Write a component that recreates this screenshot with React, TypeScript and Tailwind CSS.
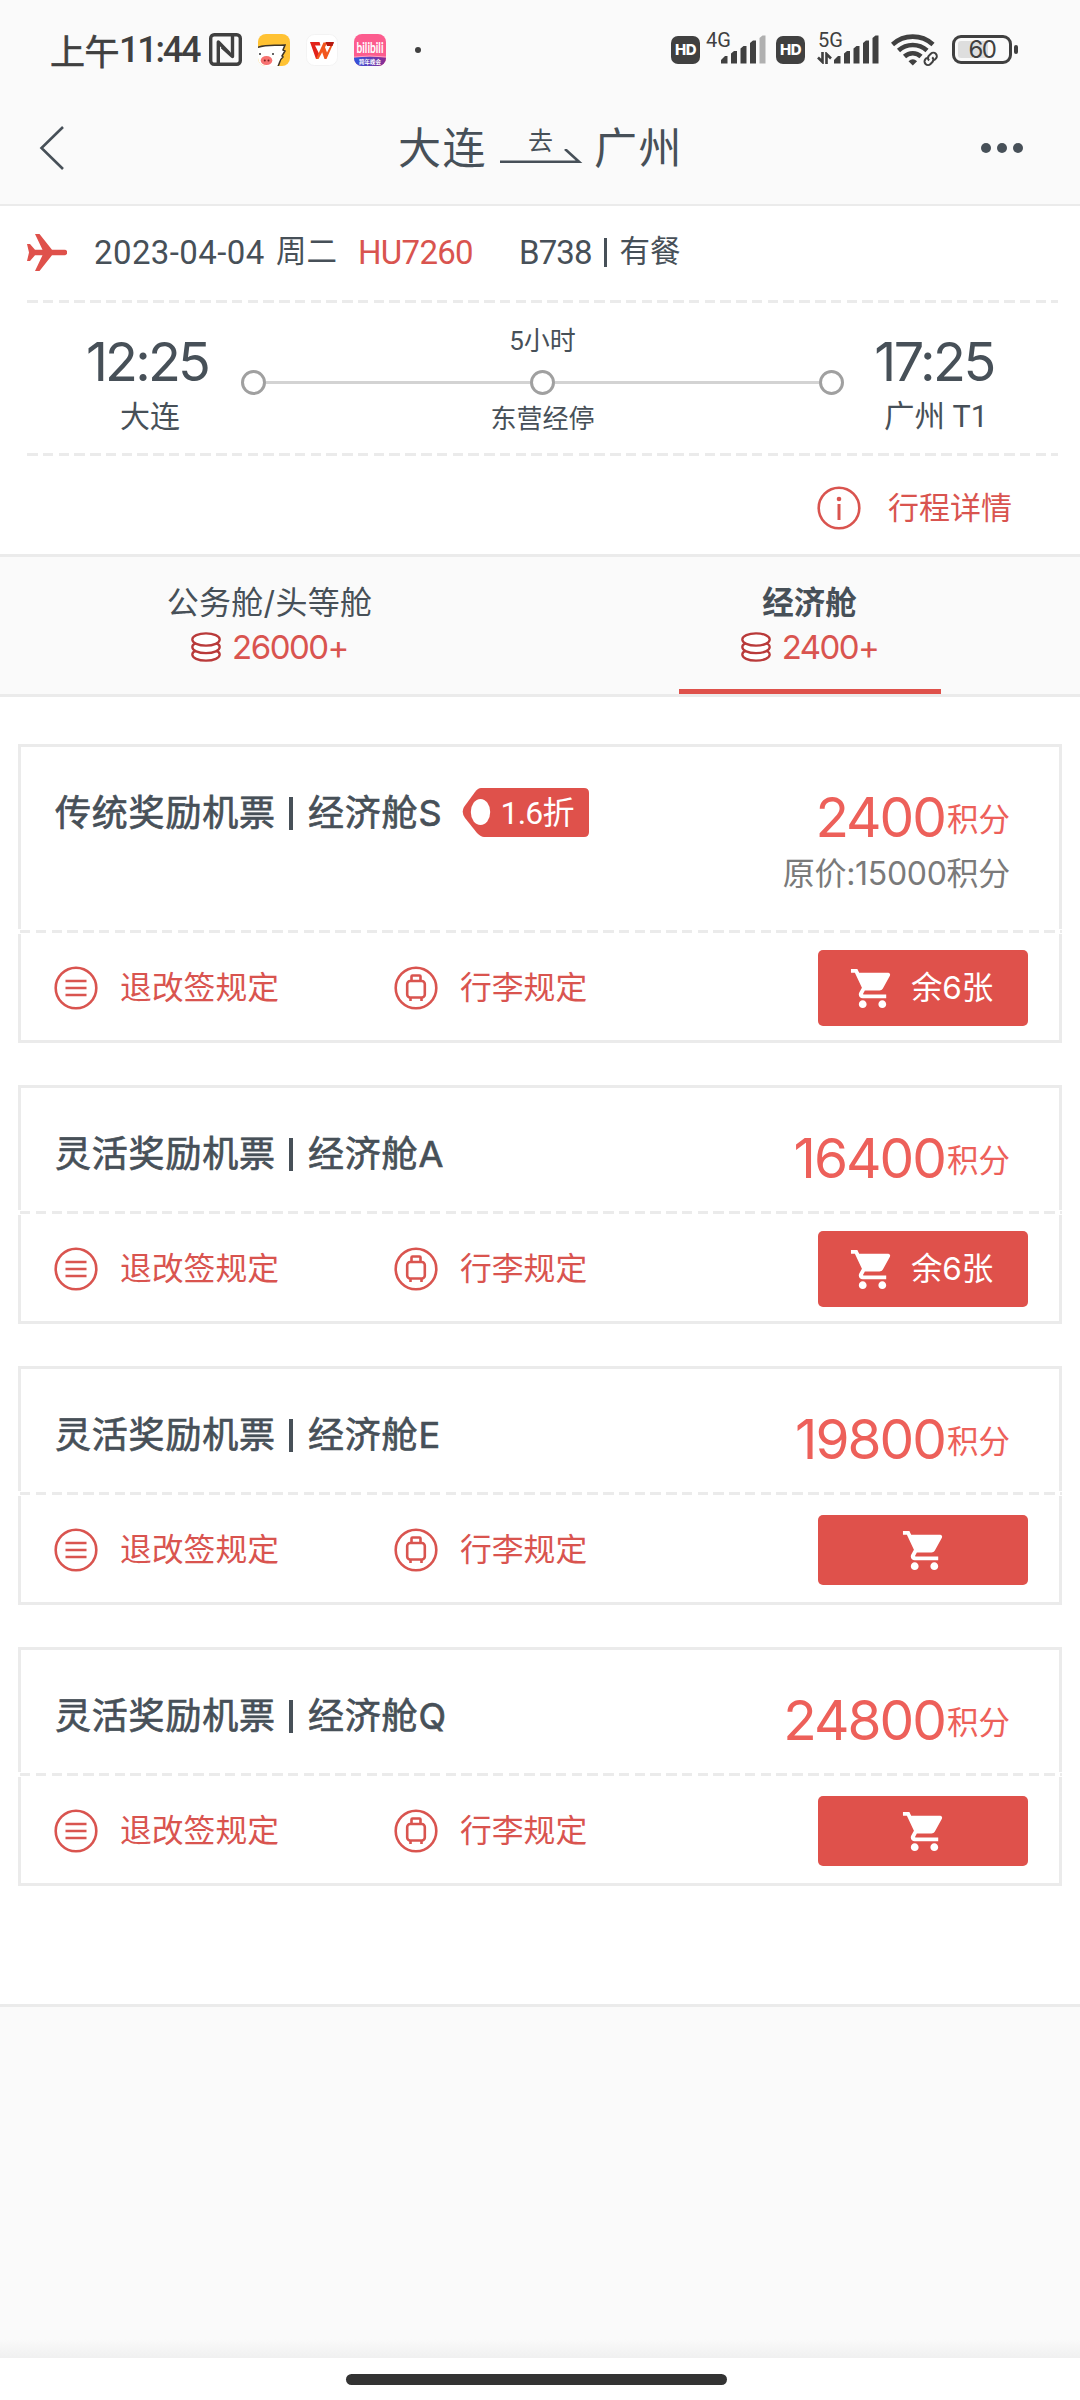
import React from "react";

type Fare = { name: string; discount?: string; price: string; original?: string; left?: string };

const fares: Fare[] = [
  { name: "传统奖励机票丨经济舱S", discount: "1.6折", price: "2400", original: "原价:15000积分", left: "余6张" },
  { name: "灵活奖励机票丨经济舱A", price: "16400", left: "余6张" },
  { name: "灵活奖励机票丨经济舱E", price: "19800" },
  { name: "灵活奖励机票丨经济舱Q", price: "24800" },
];

function HdBadge() {
  return (
    <div className="flex h-[28px] w-[29px] items-center justify-center rounded-[7px] bg-[#404040] font-['Inter',sans-serif] text-[15px] leading-none font-extrabold tracking-[-0.5px] text-white">
      HD
    </div>
  );
}

function Signal({ faded = false }: { faded?: boolean }) {
  return (
    <svg width="45" height="29" viewBox="0 0 45 29" fill="#404040" className="block">
      <path d="M0 28.500V25l4-4h2.500v7.500z" />
      <path d="M10 28.500V18.500l3-2.500h3v12.500z" />
      <path d="M19.500 28.500V13.500l3-2.500h3v17.500z" />
      <path d="M29 28.500V8l3-2.500h3v23z" />
      <path d="M38.500 28.500V3l3-2.500h3v28z" fill={faded ? "#b0b0b0" : "#404040"} />
    </svg>
  );
}

function StatusBar() {
  return (
    <div className="flex h-[99px] w-full items-center text-[#404040]">
      <div className="ml-[50px] flex w-[159px] items-center leading-none whitespace-nowrap">
        <span className="w-[69px] font-['Noto_Sans_CJK_SC',sans-serif] text-[35px] tracking-[-0.5px] [-webkit-text-stroke:0.6px_#404040]">上午</span>
        <span className="font-['Roboto',sans-serif] text-[36px] font-medium tracking-[-2.2px]">11:44</span>
      </div>
      <svg width="33" height="33" viewBox="0 0 33 33" fill="none" stroke="#404040" className="block">
        <rect x="1.700" y="1.700" width="29.600" height="29.600" rx="3.500" strokeWidth="3.400" />
        <path d="M9.300 30V9L20 20M23.500 3V23.500L13 14" strokeWidth="3.400" strokeLinejoin="round" />
      </svg>
      <svg width="32" height="32" viewBox="0 0 32 32" className="ml-[16px] block">
        <defs>
          <clipPath id="pig"><rect width="32" height="32" rx="8" /></clipPath>
        </defs>
        <g clipPath="url(#pig)">
          <rect width="32" height="32" fill="#ffc233" />
          <path d="M-2 14C8 10 16 12 27 11L25 16L27 17L24 22L25 23C21 26 22 30 19 34H-2Z" fill="#fff" stroke="#3d3428" strokeWidth="1.500" />
          <ellipse cx="8.500" cy="26.500" rx="5.800" ry="4.600" fill="#f7716f" />
          <circle cx="6.800" cy="26.500" r="1" fill="#7a2020" />
          <circle cx="10.500" cy="26.500" r="1" fill="#7a2020" />
          <circle cx="2" cy="20" r="1" fill="#333" />
          <circle cx="15" cy="20" r="1" fill="#333" />
        </g>
      </svg>
      <svg width="32" height="32" viewBox="0 0 32 32" className="ml-[16px] block">
        <rect x=".5" y=".5" width="31" height="31" rx="8" fill="#fff" stroke="#f3f3f3" />
        <path d="M4 8H13.500L14.500 11.500H9L13 19.500L11.500 25H10Z" fill="#e2231a" />
        <path d="M10 25L17.500 8.500H21.500L12.500 25Z" fill="#f2571d" />
        <path d="M15 15L18 10.500L21 18.500L24.500 11.500L28 8L20.500 25H18.500Z" fill="#f2571d" />
        <path d="M19.500 8H28L26.500 12H21Z" fill="#b5180f" />
      </svg>
      <svg width="32" height="32" viewBox="0 0 32 32" className="ml-[16px] block">
        <defs>
          <clipPath id="bili"><rect width="32" height="32" rx="8" /></clipPath>
          <linearGradient id="biliFoot" x1="0" x2="1" y1="0" y2="0">
            <stop offset="0" stopColor="#2b55e0" />
            <stop offset="1" stopColor="#8d2b90" />
          </linearGradient>
        </defs>
        <g clipPath="url(#bili)">
          <rect width="32" height="32" fill="#fc5c8e" />
          <path d="M0 23.500Q16 21.500 32 23.500V32H0Z" fill="url(#biliFoot)" />
          <path d="M0 23Q16 21 32 23" fill="none" stroke="#ff9fc0" strokeWidth="1" />
          <text x="16" y="19" textAnchor="middle" fill="#fff" fontFamily="Lato, sans-serif" fontWeight="700" fontSize="15" textLength="27" lengthAdjust="spacingAndGlyphs">bilibili</text>
          <text x="16" y="30" textAnchor="middle" fill="#fff" fontFamily="Noto Sans CJK SC, sans-serif" fontWeight="700" fontSize="5.500">跨年晚会</text>
        </g>
      </svg>
      <div className="ml-[29px] size-[6px] rounded-full bg-[#404040]" />
      <div className="ml-auto flex items-center pr-[62px]">
        <HdBadge />
        <div className="relative ml-[21px]">
          <Signal faded />
          <span className="absolute -top-[5px] -left-[15px] font-['Roboto',sans-serif] text-[20px] leading-none">4G</span>
        </div>
        <div className="ml-[10px]"><HdBadge /></div>
        <div className="relative ml-[29px]">
          <Signal />
          <span className="absolute -top-[5px] -left-[16px] font-['Roboto',sans-serif] text-[20px] leading-none">5G</span>
          <svg width="15" height="12" viewBox="0 0 15 12" fill="none" stroke="#404040" strokeWidth="2.600" className="absolute top-[17px] -left-[17px] block">
            <path d="M5.500 0V10L1 5.500M9.500 12V2L14 6.500" />
          </svg>
        </div>
        <svg width="48" height="33" viewBox="0 0 48 33" fill="none" stroke="#404040" className="ml-[12px] block">
          <g strokeWidth="4.600">
            <path d="M1.500 11.500A30 30 0 0 1 42 11.500" />
            <path d="M7.500 17.500A21 21 0 0 1 36 17.500" />
            <path d="M13.500 23.500A12 12 0 0 1 30 23.500" />
          </g>
          <path d="M17.500 28.200Q21.800 24.500 26.100 28.200L21.800 32.500Z" fill="#404040" stroke="none" />
          <g strokeWidth="2" transform="rotate(-45 39.500 26)">
            <path d="M38 22.500H36A3.500 3.500 0 0 0 36 29.500H39A3.500 3.500 0 0 0 42 26" />
            <path d="M41 29.500H43.500A3.500 3.500 0 0 0 43.500 22.500H40.500A3.500 3.500 0 0 0 37.500 26" />
          </g>
        </svg>
        <div className="relative ml-[13px] flex h-[29px] w-[60px] items-center justify-center rounded-[9px] border-[3px] border-[#404040]">
          <div className="absolute top-[3px] left-[3px] h-[17px] w-[30px] rounded-[3px] bg-[#dedede]" />
          <span className="relative font-['Inter',sans-serif] text-[24px] leading-none tracking-[-1.5px]">60</span>
        </div>
        <div className="ml-[2px] h-[9px] w-[4px] rounded-[2px] bg-[#404040]" />
      </div>
    </div>
  );
}

function NavBar() {
  return (
    <div className="flex h-[105px] items-start text-[#475058]">
      <svg width="26" height="44" viewBox="0 0 26 44" fill="none" stroke="#475058" strokeWidth="2.600" className="mt-[27px] ml-[39px] block">
        <path d="M24 1L2.500 22L24 43" />
      </svg>
      <div className="mt-[22px] ml-[333px] flex h-[48px] items-center font-['Noto_Sans_CJK_SC',sans-serif]">
        <span className="w-[90px] text-[43px] leading-none tracking-[1.5px] whitespace-nowrap">大连</span>
        <div className="ml-[12px] flex w-[83px] flex-col items-center">
          <span className="mr-[2px] h-[24px] text-[25px] leading-none">去</span>
          <svg width="83" height="15" viewBox="0 0 83 15" fill="none" stroke="#475058" strokeWidth="2.600" className="-mt-[2px] block">
            <path d="M0 12.700H79L65 0" />
          </svg>
        </div>
        <span className="ml-[11px] text-[43px] leading-none tracking-[1.5px] whitespace-nowrap">广州</span>
      </div>
      <div className="mt-[44px] ml-auto flex gap-[6px] pr-[57px]">
        <i className="size-[10px] rounded-full bg-[#475058]" />
        <i className="size-[10px] rounded-full bg-[#475058]" />
        <i className="size-[10px] rounded-full bg-[#475058]" />
      </div>
    </div>
  );
}

function Dashes({ className = "" }: { className?: string }) {
  return (
    <div
      className={
        "h-[3px] bg-[repeating-linear-gradient(90deg,#ebebeb_0,#ebebeb_10.5px,#ffffff_10.5px,#ffffff_15.76px)] " + className
      }
    />
  );
}

function Dot() {
  return <i className="block size-[25px] shrink-0 rounded-full border-[3px] border-[#a0a0a0] bg-white" />;
}

function Flight() {
  return (
    <section className="h-[348px] font-['Roboto','Noto_Sans_CJK_SC',sans-serif] text-[#475058]">
      <div className="flex h-[94px] items-center pb-[1px] pl-[27px] text-[33px] leading-none whitespace-nowrap">
        <svg width="40" height="37" viewBox="0 0 40 37" fill="#df514b" className="block">
          <path d="M0 10H3L8 15.800H15.500L8 0H12.500L25 15.800H37.500a2.700 2.700 0 0 1 0 5.400H25L12.500 37H8L15.500 21.200H8L3 27H0L2 18.500Z" />
        </svg>
        <span className="ml-[27px] w-[182px] tracking-[0.4px]">2023-04-04</span>
        <span className="w-[82px] text-[30.500px]">周二</span>
        <span className="w-[161px] tracking-[-0.7px] text-[#d9544f]">HU7260</span>
        <span className="w-[85px] tracking-[-0.9px]">B738</span>
        <i className="h-[29px] w-[2.500px] bg-[#475058]" />
        <span className="ml-[13px] text-[30.500px]">有餐</span>
      </div>
      <Dashes className="ml-[27px] w-[1031px]" />
      <div className="flex h-[150px]">
        <div className="ml-[70px] flex w-[160px] flex-col items-center">
          <span className="mt-[31px] mr-[6px] h-[56px] font-['Inter',sans-serif] text-[54px] leading-[56px] tracking-[-2.800px]">12:25</span>
          <span className="mt-[11px] text-[30px] leading-[32px]">大连</span>
        </div>
        <div className="ml-[11px] flex w-[603px] flex-col items-center">
          <span className="mt-[25px] text-[26px] leading-[26px]">5小时</span>
          <div className="mt-[16px] flex w-full items-center">
            <Dot />
            <div className="h-[3px] flex-1 bg-[#d3d3d3]" />
            <Dot />
            <div className="h-[3px] flex-1 bg-[#d3d3d3]" />
            <Dot />
          </div>
          <span className="mt-[11px] text-[26px] leading-[26px]">东营经停</span>
        </div>
        <div className="ml-[12px] flex w-[160px] flex-col items-center">
          <span className="mt-[31px] mr-[4px] h-[56px] font-['Inter',sans-serif] text-[54px] leading-[56px] tracking-[-2.500px]">17:25</span>
          <span className="mt-[11px] text-[30.500px] leading-[32px] whitespace-nowrap">广州 T1</span>
        </div>
      </div>
      <Dashes className="ml-[27px] w-[1031px]" />
      <div className="flex h-[98px] items-center justify-end pt-[6px] pr-[68px] text-[#d9544f]">
        <svg width="44" height="44" viewBox="0 0 44 44" fill="none" stroke="#d9544f" strokeWidth="2.600" className="block">
          <circle cx="22" cy="22" r="20.300" />
          <path d="M22 18V34" strokeWidth="3" />
          <circle cx="22" cy="13" r="2.300" fill="#d9544f" stroke="none" />
        </svg>
        <span className="ml-[27px] text-[31px] leading-none">行程详情</span>
      </div>
    </section>
  );
}

function Coins() {
  return (
    <svg width="30" height="30" viewBox="0 0 30 30" fill="#fff" stroke="#b93a3a" strokeWidth="2.300" className="block">
      <path d="M1.300 22.500C1.300 20 4 17.500 15 17.500S28.700 20 28.700 22.500C28.700 26 23 28.700 15 28.700S1.300 26 1.300 22.500Z" />
      <path d="M1.300 15C1.300 12 4 10 15 10S28.700 12 28.700 15C28.700 18.500 23 21.200 15 21.200S1.300 18.500 1.300 15Z" />
      <ellipse cx="15" cy="7.500" rx="13.700" ry="6.200" />
    </svg>
  );
}

function Tabs() {
  return (
    <div className="flex h-[143px] border-y-[3px] border-[#ebebeb] bg-[#fafafa] font-['Inter','Noto_Sans_CJK_SC',sans-serif]">
      <div className="flex w-[539px] flex-col items-center">
        <span className="mt-[28px] text-[32px] leading-[36px] tracking-[0.3px] text-[#475058]">公务舱/头等舱</span>
        <div className="mt-[8px] flex items-center">
          <Coins />
          <span className="ml-[11px] text-[33px] leading-[36px] tracking-[-1.5px] text-[#d9544f]">26000+</span>
        </div>
      </div>
      <div className="flex w-[541px] flex-col items-center">
        <span className="mt-[28px] text-[31.500px] leading-[36px] font-bold text-[#475058]">经济舱</span>
        <div className="mt-[8px] flex items-center">
          <Coins />
          <span className="ml-[11px] text-[33px] leading-[36px] tracking-[-1.600px] text-[#d9544f]">2400+</span>
        </div>
        <div className="mt-auto h-[5px] w-[262px] bg-[#df514b]" />
      </div>
    </div>
  );
}

function Cart() {
  return (
    <svg width="47" height="47" viewBox="0 0 24 24" fill="#fff" className="block shrink-0">
      <path d="M7 18c-1.100 0-1.990.9-1.990 2S5.900 22 7 22s2-.9 2-2-.9-2-2-2zM1 2v2h2l3.600 7.590-1.350 2.450c-.16.28-.25.61-.25.96 0 1.100.9 2 2 2h12v-2H7.420c-.14 0-.25-.11-.25-.25l.03-.12.9-1.630h7.450c.75 0 1.410-.41 1.750-1.030l3.580-6.490A1.003 1.003 0 0 0 20 4H5.210l-.94-2H1zm16 16c-1.100 0-1.990.9-1.990 2s.89 2 1.990 2 2-.9 2-2-.9-2-2-2z" />
    </svg>
  );
}

function RulesIcon() {
  return (
    <svg width="44" height="44" viewBox="0 0 44 44" fill="none" stroke="#d9544f" strokeWidth="2.600" className="block">
      <circle cx="22" cy="22" r="20.300" />
      <path d="M11.500 15H32.500M11.500 22H32.500M11.500 29H32.500" />
    </svg>
  );
}

function LuggageIcon() {
  return (
    <svg width="44" height="44" viewBox="0 0 44 44" fill="none" stroke="#d9544f" strokeWidth="2.600" className="block">
      <circle cx="22" cy="22" r="20.300" />
      <rect x="13.200" y="15" width="17.600" height="16.500" rx="3" />
      <path d="M17.500 15V10.500Q17.500 9.500 18.500 9.500H25.500Q26.500 9.500 26.500 10.500V15M16.500 31.500V35M27.500 31.500V35" />
    </svg>
  );
}

function FareCard({ fare }: { fare: Fare }) {
  const [product, cabin] = fare.name.split("丨");
  return (
    <article className="w-[1044px] font-['Inter','Noto_Sans_CJK_SC',sans-serif]">
      <div
        className={
          "flex border-x-[3px] border-t-[3px] border-[#ebebeb] pl-[34px] " + (fare.original ? "h-[185px]" : "h-[125px]")
        }
      >
        <div className="mt-[44px] flex h-[44px] items-center text-[36px] leading-none whitespace-nowrap text-[#475058] [-webkit-text-stroke:0.7px_#475058]">
          <span className="w-[234px] tracking-[0.8px]">{product}</span>
          <i className="h-[33px] w-[4px] bg-[#475058]" />
          <span className="ml-[15px] tracking-[0.8px]">
            {cabin.slice(0, 3)}
            <span className="tracking-normal">{cabin.slice(3)}</span>
          </span>
        </div>
        {fare.discount && (
          <div className="relative mt-[41px] ml-[20px] h-[49px] w-[127px]">
            <svg width="127" height="49" viewBox="0 0 127 49" className="block">
              <path d="M19 0H122Q127 0 127 5V44Q127 49 122 49H22Q19 49 15 45L3 30Q-1 24.500 2 19L13 4Q16 0 19 0Z" fill="#df514b" />
              <ellipse cx="18.500" cy="24" rx="9.700" ry="13" fill="#fff" />
            </svg>
            <span className="absolute top-[8px] left-[39px] font-['Roboto','Noto_Sans_CJK_SC',sans-serif] text-[32px] leading-[34px] tracking-[-0.8px] whitespace-nowrap text-white">
              {fare.discount}
            </span>
          </div>
        )}
        <div className="mt-[43px] ml-auto flex flex-col items-end pr-[49px] whitespace-nowrap">
          <div className="flex h-[56px] items-start text-[#ed605a]">
            <span className="-mt-[1px] text-[55px] leading-[56px] tracking-[-2px]">{fare.price}</span>
            <span className="mt-[14px] ml-[2px] text-[31.500px] leading-[32px]">积分</span>
          </div>
          {fare.original && (
            <span className="mt-[10px] text-[32px] leading-[36px] tracking-[-0.300px] text-[#7a7a7a]">{fare.original}</span>
          )}
        </div>
      </div>
      <Dashes className="my-px ml-[2px] w-[1042px]" />
      <div className="flex h-[109px] items-center border-x-[3px] border-b-[3px] border-[#ebebeb] pt-[2px] pr-[31px] pl-[33px] text-[31.800px] leading-none whitespace-nowrap text-[#d9544f]">
        <div className="flex w-[340px] items-center gap-[22px]">
          <RulesIcon />
          <span>退改签规定</span>
        </div>
        <div className="flex items-center gap-[22px]">
          <LuggageIcon />
          <span>行李规定</span>
        </div>
        <div
          className={
            "ml-auto flex w-[210px] items-center rounded-[5px] bg-[#df514b] text-white " +
            (fare.left ? "h-[76px] gap-[15px] pl-[31px]" : "h-[70px] justify-center pl-[2px]")
          }
        >
          <Cart />
          {fare.left && <span className="text-[31.500px] tracking-[-0.2px]">{fare.left}</span>}
        </div>
      </div>
    </article>
  );
}

export default function App() {
  return (
    <div className="flex h-[2400px] w-[1080px] flex-col overflow-hidden bg-white">
      <header className="h-[206px] shrink-0 border-b-2 border-[#ebebeb] bg-[#fafafa]">
        <StatusBar />
        <NavBar />
      </header>
      <Flight />
      <Tabs />
      <main className="flex h-[1307px] shrink-0 flex-col gap-[42px] pt-[47px] pl-[18px]">
        {fares.map((f) => (
          <FareCard key={f.name} fare={f} />
        ))}
      </main>
      <div className="flex h-[354px] shrink-0 flex-col justify-end border-t-[3px] border-[#ebebeb] bg-[#fafafa]">
        <div className="h-[19px] bg-linear-to-b from-[#fafafa] to-[#f0f0f0]" />
      </div>
      <footer className="flex flex-1 justify-center bg-white pt-[16px] pr-[7px]">
        <div className="h-[11px] w-[381px] rounded-full bg-[#333333]" />
      </footer>
    </div>
  );
}
